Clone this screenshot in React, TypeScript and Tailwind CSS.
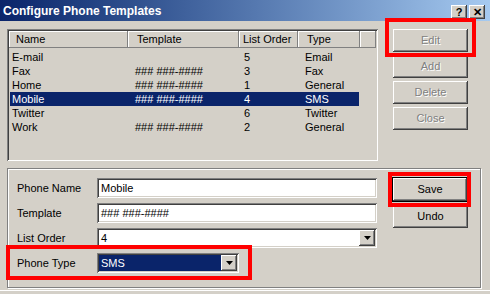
import React from 'react';

const raised =
  'bg-[#d4d0c8] shadow-[inset_-1px_-1px_#404040,inset_1px_1px_#fff,inset_-2px_-2px_#808080,inset_2px_2px_#d4d0c8]';
const sunken =
  'shadow-[inset_1px_1px_#808080,inset_-1px_-1px_#fff,inset_2px_2px_#404040,inset_-2px_-2px_#d4d0c8]';

const rows = [
  { name: 'E-mail', template: '', order: '5', type: 'Email' },
  { name: 'Fax', template: '### ###-####', order: '3', type: 'Fax' },
  { name: 'Home', template: '### ###-####', order: '1', type: 'General' },
  { name: 'Mobile', template: '### ###-####', order: '4', type: 'SMS', selected: true },
  { name: 'Twitter', template: '', order: '6', type: 'Twitter' },
  { name: 'Work', template: '### ###-####', order: '2', type: 'General' },
];

function Arrow() {
  return (
    <svg width="7" height="4" viewBox="0 0 7 4">
      <path d="M0 0h7L3.5 4z" fill="#000" />
    </svg>
  );
}

function DropButton() {
  return (
    <div className={`w-[16px] h-[16px] flex items-center justify-center ${raised}`}>
      <Arrow />
    </div>
  );
}

function SideButton({ label, disabled }: { label: string; disabled?: boolean }) {
  return (
    <div
      className={`w-[75px] h-[23px] flex items-center justify-center ${raised} ${
        disabled ? 'text-[#808080] [text-shadow:1px_1px_0_#fff]' : 'text-black'
      }`}
    >
      {label}
    </div>
  );
}

export default function App() {
  return (
    <div className="relative w-[490px] h-[294px] overflow-hidden bg-[#d4d0c8] font-['Liberation_Sans',Arial,sans-serif] text-[11px] text-black leading-none">
      {/* title bar */}
      <div className="h-[21px] flex items-center pl-[3px] pr-[5px] bg-gradient-to-r from-[#0a246a] to-[#a6caf0]">
        <span className="text-white font-bold text-[12px]">Configure Phone Templates</span>
        <div className="ml-auto flex gap-[2px] mt-[3px]">
          <div className={`w-[16px] h-[14px] flex items-center justify-center font-bold text-[11px] ${raised}`}>?</div>
          <div className={`w-[16px] h-[14px] flex items-center justify-center font-bold text-[11px] ${raised}`}>✕</div>
        </div>
      </div>

      {/* list + buttons */}
      <div className="flex pl-[7px] pt-[8px]">
        <div className={`w-[371px] h-[132px] p-[2px] ${sunken}`}>
          <div className="flex h-[17px]">
            {[
              ['Name', 'w-[119px] pl-[7px]'],
              ['Template', 'w-[111px] pl-[9px]'],
              ['List Order', 'w-[59px] pl-[4px]'],
              ['Type', 'w-[62px] pl-[9px]'],
              ['', 'flex-1'],
            ].map(([label, cls], i) => (
              <div
                key={i}
                className={`${cls} h-full flex items-center whitespace-nowrap overflow-hidden shadow-[inset_-1px_-1px_#808080,inset_1px_1px_#fff]`}
              >
                {label}
              </div>
            ))}
          </div>
          <div className="mt-[2px] ml-[1px]">
            {rows.map((r) => (
              <div
                key={r.name}
                className={`flex h-[14px] items-center w-[349px] ${
                  r.selected ? 'bg-[#0a246a] text-white' : ''
                }`}
              >
                <div className="w-[125px] pl-[2px]">{r.name}</div>
                <div className="w-[109px]">{r.template}</div>
                <div className="w-[61px]">{r.order}</div>
                <div className="flex-1">{r.type}</div>
              </div>
            ))}
          </div>
        </div>
        <div className="ml-[15px] flex flex-col gap-[3px]">
          <SideButton label="Edit" disabled />
          <SideButton label="Add" disabled />
          <SideButton label="Delete" disabled />
          <SideButton label="Close" disabled />
        </div>
      </div>

      {/* edit group */}
      <div className="ml-[7px] mt-[7px] w-[474px] h-[120px] border border-[#808080] shadow-[inset_1px_1px_#fff,1px_1px_#fff] flex pt-[9px] pl-[9px]">
        <div className="flex flex-col gap-[5px]">
          <div className="flex items-center h-[20px]">
            <div className="w-[80px]">Phone Name</div>
            <div className={`w-[280px] h-[20px] bg-white flex items-center pl-[4px] ${sunken}`}>Mobile</div>
          </div>
          <div className="flex items-center h-[20px]">
            <div className="w-[80px]">Template</div>
            <div className={`w-[280px] h-[20px] bg-white flex items-center pl-[4px] ${sunken}`}>### ###-####</div>
          </div>
          <div className="flex items-center h-[20px]">
            <div className="w-[80px]">List Order</div>
            <div className={`w-[280px] h-[20px] bg-white flex items-center pl-[4px] pr-[2px] ${sunken}`}>
              <span className="flex-1">4</span>
              <DropButton />
            </div>
          </div>
          <div className="flex items-center h-[20px]">
            <div className="w-[80px]">Phone Type</div>
            <div className={`w-[142px] h-[20px] bg-white flex items-center p-[2px] ${sunken}`}>
              <span className="flex-1 h-full bg-[#0a246a] text-white flex items-center pl-[2px]">SMS</span>
              <DropButton />
            </div>
          </div>
        </div>
        <div className="ml-[15px] -mt-[1px] flex flex-col gap-[3px]">
          <div className="w-[76px] h-[25px] border border-black">
            <div className={`w-full h-full flex items-center justify-center ${raised}`}>Save</div>
          </div>
          <div className="ml-[1px]">
            <SideButton label="Undo" />
          </div>
        </div>
      </div>
      <div className="mt-[2px] h-px bg-white" />

      {/* annotation boxes */}
      <div className="absolute left-[385px] top-[18px] w-[91px] h-[39px] border-4 border-[#ff0000]" />
      <div className="absolute left-[388px] top-[172px] w-[83px] h-[35px] border-4 border-[#ff0000]" />
      <div className="absolute left-[6px] top-[245px] w-[246px] h-[35px] border-4 border-[#ff0000]" />
    </div>
  );
}
